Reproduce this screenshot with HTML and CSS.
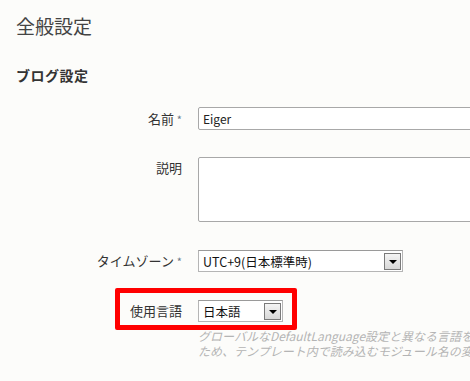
FILE: index.html
```html
<!DOCTYPE html>
<html lang="ja">
<head>
    <meta charset="UTF-8">
    <title>全般設定</title>
    <link rel="stylesheet" href="styles.css">
</head>
<body>

    <!-- Page Title -->
    <h1 class="page-title">全般設定</h1>

    <!-- Blog Settings -->
    <div class="section">
        <h2>ブログ設定</h2>

        <div class="form-row first">
            <label class="label">名前 <span class="req">*</span></label>
            <div class="field">
                <input type="text" class="text-input" value="Eiger">
            </div>
        </div>

        <div class="form-row top">
            <label class="label">説明</label>
            <div class="field">
                <textarea class="text-area"></textarea>
            </div>
        </div>

        <div class="form-row">
            <label class="label">タイムゾーン <span class="req">*</span></label>
            <div class="field">
                <div class="select tz">
                    <span class="select-value">UTC+9(日本標準時)</span>
                    <span class="select-btn"><span class="arrow"></span></span>
                </div>
            </div>
        </div>

        <div class="form-row lang-row">
            <div class="highlight"></div>
            <label class="label">使用言語</label>
            <div class="field">
                <div class="select lang">
                    <span class="select-value">日本語</span>
                    <span class="select-btn"><span class="arrow"></span></span>
                </div>
                <div class="hint">
                    <p>グローバルなDefaultLanguage設定と異なる言語を選択する</p>
                    <p>ため、テンプレート内で読み込むモジュール名の変更が必要です。</p>
                </div>
            </div>
        </div>
    </div>

</body>
</html>
```

FILE: styles.css
```css
/* General Styling */
body {
    margin: 0;
    background-color: #fcfcfa;
    font-family: "Noto Sans CJK JP", "Liberation Sans", sans-serif;
    color: #333;
    overflow: hidden;
}

.page-title {
    margin: 0;
    padding: 13px 0 0 16px;
    font-size: 19px;
    font-weight: normal;
    line-height: 26px;
    color: #444;
}

.section h2 {
    margin: 26px 0 0 16px;
    font-size: 14px;
    line-height: 20px;
    letter-spacing: 0.5px;
    color: #333;
}

/* Form Rows */
.form-row {
    display: grid;
    grid-template-columns: 182px 1fr;
    column-gap: 16px;
    align-items: center;
    margin-bottom: 28px;
    position: relative;
}

.form-row.first {
    margin-top: 22px;
    margin-bottom: 27px;
}

.form-row.top {
    align-items: start;
    margin-bottom: 28px;
}

.label {
    text-align: right;
    font-size: 13px;
    line-height: 18px;
    color: #333;
    white-space: nowrap;
}

.form-row.top .label {
    padding-top: 2px;
}

.req {
    font-size: 11px;
    color: #6a7a8a;
}

.field {
    min-width: 0;
}

.text-input {
    display: block;
    box-sizing: border-box;
    width: 300px;
    height: 23px;
    padding: 0 4px;
    border: 1px solid #a8a8a8;
    border-radius: 2px;
    background: #fff;
    font-family: "Noto Sans CJK JP", "Liberation Sans", sans-serif;
    font-size: 12px;
    color: #222;
}

.text-area {
    display: block;
    box-sizing: border-box;
    width: 300px;
    height: 65px;
    border: 1px solid #a8a8a8;
    border-radius: 2px;
    background: #fff;
    resize: none;
}

/* Select Boxes */
.select {
    box-sizing: border-box;
    height: 22px;
    display: flex;
    align-items: center;
    justify-content: space-between;
    padding: 0 1px 0 4px;
    border: 1px solid #b5b5b5;
    border-top-color: #9a9a9a;
    background: #fff;
    font-size: 12.5px;
    color: #111;
}

.select.tz {
    width: 205px;
}

.select.lang {
    width: 85px;
}

.select-btn {
    box-sizing: border-box;
    width: 17px;
    height: 17px;
    display: flex;
    align-items: center;
    justify-content: center;
    border: 1px solid #7a7a7a;
    background: linear-gradient(#f4f4f4, #d8d8d8);
}

.arrow {
    width: 0;
    height: 0;
    border-left: 4px solid transparent;
    border-right: 4px solid transparent;
    border-top: 4px solid #000;
    margin-top: 1px;
}

/* Language Row */
.lang-row {
    align-items: start;
}

.lang-row .label {
    padding-top: 2px;
}

.hint {
    width: 272px;
    margin-top: 6px;
    overflow: hidden;
}

.hint p {
    margin: 0;
    font-size: 12px;
    line-height: 15px;
    font-style: italic;
    color: #b4b4b4;
    white-space: nowrap;
}

.highlight {
    position: absolute;
    left: 115px;
    top: -12px;
    width: 182px;
    height: 42px;
    box-sizing: border-box;
    border: 5px solid #ff0000;
    border-radius: 2px;
    z-index: 1;
}
```
